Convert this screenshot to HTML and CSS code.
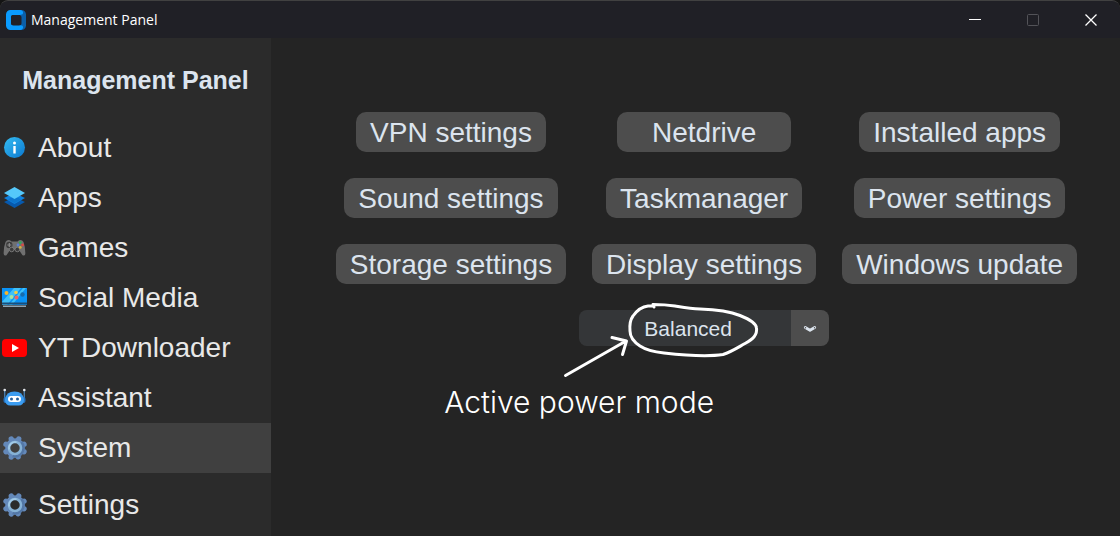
FILE: index.html
```html
<!DOCTYPE html>
<html lang="en">
<head>
<meta charset="utf-8">
<title>Management Panel</title>
<link rel="stylesheet" href="styles.css">
</head>
<body>
<svg class="defs" aria-hidden="true">
  <symbol id="gear" viewBox="0 0 26 26">
    <g stroke="#6489ba" stroke-width="5.400" stroke-linecap="round">
      <path d="M9.300 4L16.100 21.800M16.700 4L9.300 22M4 9.300L22 16.700M4 16.700L22 9.300"/>
    </g>
    <circle cx="13" cy="13" r="9.800" fill="#6489ba"/>
    <path d="M20 6A9.800 9.800 0 0 1 10 22.200Z" fill="#5377a6"/>
    <circle cx="13" cy="13" r="6" fill="var(--hole)" stroke="#86b2d6" stroke-width="2.600"/>
    <path d="M7.200 14.500A6 6 0 0 1 14.500 7.200" fill="none" stroke="#a3cbe8" stroke-width="1.600"/>
  </symbol>
</svg>
<div class="window">
  <header class="titlebar">
    <svg class="logo" viewBox="0 0 20 20" aria-hidden="true">
      <path fill="#0b5fa8" d="M14 0h1.500A4.500 4.500 0 0 1 20 4.500v11a4.500 4.500 0 0 1-4.500 4.500H14z"/>
      <path fill="#0a9bff" d="M4.500 0h10A2.600 2.600 0 0 1 16.500 4.200L14 5H7a2 2 0 0 0-2 2v6a2 2 0 0 0 2 2h7l2.500.8A2.600 2.600 0 0 1 14.500 20h-10A4.500 4.500 0 0 1 0 15.500v-11A4.500 4.500 0 0 1 4.500 0z"/>
      <rect x="5" y="5" width="10.500" height="10.500" rx="2.500" fill="#212128"/>
    </svg>
    <span class="title">Management Panel</span>
    <div class="controls">
      <button class="control" type="button" aria-label="Minimize"><svg viewBox="0 0 12 12"><path d="M0 5.500h12"/></svg></button>
      <button class="control" type="button" aria-label="Maximize" disabled><svg viewBox="0 0 12 12"><rect x=".5" y=".5" width="11" height="11" rx="1"/></svg></button>
      <button class="control" type="button" aria-label="Close"><svg viewBox="0 0 12 12"><path stroke-width="1.300" d="M.5.5l11 11M11.500.5l-11 11"/></svg></button>
    </div>
  </header>
  <div class="body">
    <aside class="sidebar">
      <h1 class="heading">Management Panel</h1>
      <nav class="nav">
        <button class="nav-item" type="button">
          <svg class="icon" viewBox="0 0 26 26" aria-hidden="true">
            <defs><linearGradient id="info" x1="0" y1="0" x2="1" y2="1"><stop offset="0" stop-color="#35bdf2"/><stop offset="1" stop-color="#0b78d0"/></linearGradient></defs>
            <circle cx="12.500" cy="12.500" r="10.500" fill="url(#info)"/>
            <circle cx="12.500" cy="8" r="1.500" fill="#fff"/><path d="M12.500 11v7.500" stroke="#fff" stroke-width="2.400"/>
          </svg>About</button>
        <button class="nav-item" type="button">
          <svg class="icon" viewBox="0 0 26 26" aria-hidden="true">
            <path fill="#0759ad" d="M2 17l10.500-5L23 17l-10.500 6z"/>
            <path fill="#0f82df" d="M2 13l10.500-5L23 13l-10.500 6z"/>
            <path fill="#0a68bd" d="M6 14.500l6.500-3.500 6.500 3.500-6.500 3.700z" opacity=".5"/>
            <path fill="#55c8fa" d="M2 8l10.500-6L23 8l-10.500 6z"/>
          </svg>Apps</button>
        <button class="nav-item" type="button">
          <svg class="icon" viewBox="0 0 26 26" aria-hidden="true">
            <path fill="#707070" d="M3.500 7Q5 4.500 8 5.300l1.500 1.200h6L17 5.300q3-.8 4.500 1.700 2 5.500 1.800 12-.5 2.200-2.800 1.300L17 15H8l-3.500 5.300Q2.200 21.200 1.700 19q-.3-6.500 1.800-12z"/>
            <circle cx="7.300" cy="10" r="3.200" fill="#3c3c3c"/><path d="M7.300 8v4M5.300 10h4" stroke="#8c8c8c" stroke-width="1.200"/>
            <circle cx="9.700" cy="14.500" r="2.300" fill="#3c3c3c" stroke="#858585" stroke-width=".8"/><circle cx="15.300" cy="14.500" r="2.300" fill="#3c3c3c" stroke="#858585" stroke-width=".8"/>
            <circle cx="18.300" cy="7.600" r="1.400" fill="#30a85b"/><circle cx="16" cy="10" r="1.400" fill="#5a83d0"/><circle cx="20.600" cy="10" r="1.400" fill="#d84a43"/><circle cx="18.300" cy="12.400" r="1.400" fill="#d7b03c"/>
          </svg>Games</button>
        <button class="nav-item" type="button">
          <svg class="icon" viewBox="0 0 26 26" aria-hidden="true">
            <path fill="#0b93f6" d="M0 3h25v17H0z"/><path fill="#3fc0f8" d="M12 3h7L5 20H0v-3zM21 3h3L10 20H7z"/>
            <circle cx="4.500" cy="8" r="2" fill="#f7b52b"/><circle cx="14" cy="7.500" r="1.800" fill="#f4ce42"/><circle cx="9.500" cy="12" r="2" fill="#a5e6a0"/><circle cx="14.500" cy="12.500" r="2" fill="#f06463"/><circle cx="20.500" cy="9.500" r="2.200" fill="#176cad"/>
            <path fill="#1c4e79" d="M0 17.500h25v2H0z"/><path fill="#8fa5b5" d="M1 20.500h23V22H1z"/>
          </svg>Social Media</button>
        <button class="nav-item" type="button">
          <svg class="icon" viewBox="0 0 26 26" aria-hidden="true"><rect y="4" width="25" height="18" rx="4" fill="#f00"/><path fill="#fff" d="M10 9l7 4-7 4z"/></svg>YT Downloader</button>
        <button class="nav-item" type="button">
          <svg class="icon" viewBox="0 0 26 26" aria-hidden="true">
            <path d="M2.700 5v12M22.300 5v12" stroke="#477aa9" stroke-width="1.400"/><circle cx="2.700" cy="5" r="1.300" fill="#e4e8ee"/><circle cx="22.300" cy="5" r="1.300" fill="#e4e8ee"/>
            <rect x="1.500" y="12" width="22" height="6" rx="2" fill="#2572bf"/>
            <path fill="#3b9cf0" d="M3 14.500Q4 6.500 12.500 6.500T22 14.500q0 6-5.500 6h-8q-5.500 0-5.500-6z"/>
            <rect x="6" y="11" width="13" height="6" rx="3" fill="#fff"/><circle cx="9.500" cy="14" r="1.500" fill="#245e9a"/><circle cx="15.500" cy="14" r="1.500" fill="#245e9a"/>
          </svg>Assistant</button>
        <button class="nav-item active" type="button" aria-current="page"><svg class="icon" aria-hidden="true"><use href="#gear"/></svg>System</button>
      </nav>
      <button class="nav-item" type="button"><svg class="icon" aria-hidden="true"><use href="#gear"/></svg>Settings</button>
    </aside>
    <main class="main">
      <div class="grid">
        <button class="action" type="button">VPN settings</button>
        <button class="action" type="button">Netdrive</button>
        <button class="action" type="button">Installed apps</button>
        <button class="action" type="button">Sound settings</button>
        <button class="action" type="button">Taskmanager</button>
        <button class="action" type="button">Power settings</button>
        <button class="action" type="button">Storage settings</button>
        <button class="action" type="button">Display settings</button>
        <button class="action" type="button">Windows update</button>
        <div class="power">
          <select class="power-select" aria-label="Active power mode">
            <option>Balanced</option>
          </select>
          <svg class="chevron" viewBox="0 0 14 8" aria-hidden="true"><path d="M2.300 2.500L7 5.300l4.700-2.800" stroke="#dce4ee" stroke-width="2.800" stroke-linecap="round" stroke-linejoin="round" fill="none"/><circle cx="2.500" cy="2.700" r=".7" fill="#4d4d4d"/><circle cx="11.500" cy="2.700" r=".7" fill="#4d4d4d"/></svg>
          <svg class="marker" viewBox="560 300 204 84" aria-hidden="true">
            <path d="M654 307L653 304.500Q665 304.500 675 306C684 307.500 690 308.700 700 309C716 309.500 729 311 740 315.500C750 319.500 756 323 756.500 328C757.500 335 753 339 745 343.500C737 348 731 352 723 354.500C707 357 682 355 664 353C655 352 646 350 640 346C634 342 630 337 630 331C629.500 325 630 320 633 316C638 309 643 306.500 648 306L653 306"/>
            <path d="M565.500 375.500L626 341M612 337.500L626.500 341L622.500 354.500"/>
          </svg>
          <p class="note">Active power mode</p>
        </div>
      </div>
    </main>
  </div>
</div>
</body>
</html>
```
FILE: styles.css
```css
* { box-sizing: border-box; }

body {
  margin: 0;
  background: #141414;
  font-family: "Liberation Sans", Arial, sans-serif;
  color: #dce4ee;
}

button, select { font: inherit; color: inherit; border: 0; }

.defs { display: none; }

.window {
  display: flex;
  flex-direction: column;
  min-height: 100vh;
  background: #242424;
  border-radius: 8px 8px 0 0;
  overflow: hidden;
}

.titlebar {
  display: flex;
  align-items: center;
  height: 38px;
  padding-left: 6px;
  gap: 5px;
  background: #202026;
  border-top: 1px solid #414141;
  border-radius: 8px 8px 0 0;
}

.logo { width: 20px; height: 20px; }

.title {
  font-family: "Open Sans", "Noto Sans", sans-serif;
  font-size: 14px;
  color: #fff;
}

.controls { display: flex; margin-left: auto; }

.control {
  display: flex;
  align-items: center;
  justify-content: center;
  width: 58px;
  height: 37px;
  padding: 0;
  background: transparent;
}

.control svg {
  width: 12px;
  height: 12px;
  fill: none;
  stroke: #fff;
}

.control:disabled svg { stroke: #535358; }

.body { display: flex; flex: 1; }

.sidebar {
  display: flex;
  flex-direction: column;
  width: 271px;
  flex-shrink: 0;
  gap: 7px;
  padding-bottom: 6px;
  background: #2b2b2b;
}

.heading {
  margin: 0 0 -7px;
  font-size: 25px;
  line-height: 85px;
  text-align: center;
}

.nav { display: flex; flex-direction: column; }

.nav-item {
  --hole: #2b2b2b;
  display: flex;
  align-items: center;
  gap: 10px;
  width: 100%;
  height: 50px;
  padding: 0 2px;
  background: transparent;
  font-size: 28px;
  color: #e8e8e8;
  text-align: left;
}

.nav-item.active { --hole: #404040; background: #404040; }

.icon { width: 26px; height: 26px; flex-shrink: 0; }

.main {
  flex: 1;
  padding: 74px 0 100px 22px;
}

.grid {
  display: grid;
  grid-template-columns: repeat(3, auto);
  justify-content: center;
  justify-items: center;
  gap: 26px 13px;
}

.action {
  min-width: 174px;
  height: 40px;
  padding: 2px 14px 0;
  border-radius: 10px;
  background: #4d4d4d;
  font-size: 28px;
  line-height: 38px;
  white-space: nowrap;
}

.power {
  position: relative;
  grid-column: 2;
  width: 250px;
}

.power-select {
  appearance: none;
  display: block;
  width: 100%;
  height: 36px;
  padding: 0 32px 0 0;
  border-radius: 8px;
  background: linear-gradient(to left, #4d4d4d 38px, #343638 38px);
  font-size: 21px;
  text-align: center;
  text-align-last: center;
}

.chevron {
  position: absolute;
  top: 15px;
  right: 12px;
  width: 14px;
  height: 8px;
  pointer-events: none;
}

.marker {
  position: absolute;
  top: -10px;
  left: -19px;
  width: 204px;
  height: 84px;
  fill: none;
  stroke: #fff;
  stroke-width: 3;
  stroke-linecap: round;
  stroke-linejoin: round;
  pointer-events: none;
}

.note {
  position: absolute;
  top: 74px;
  left: -135px;
  margin: 0;
  font-family: Inter, sans-serif;
  font-size: 30px;
  font-weight: 300;
  line-height: 36px;
  color: #fff;
  white-space: nowrap;
}
```
